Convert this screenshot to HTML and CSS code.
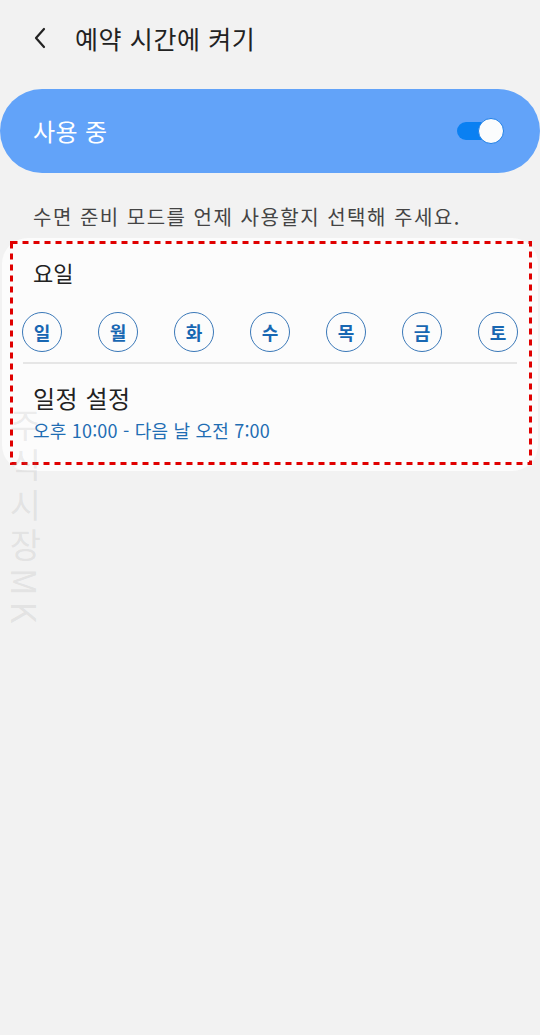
FILE: index.html
```html
<!DOCTYPE html>
<html lang="ko">
<head>
    <meta charset="UTF-8">
    <meta name="viewport" content="width=device-width, initial-scale=1.0">
    <title>예약 시간에 켜기</title>
    <link rel="stylesheet" href="styles.css">
</head>
<body>
    <div class="page">
        <div class="header">
            <svg class="back" width="14" height="22" viewBox="0 0 14 22">
                <path d="M11 2 L3 11 L11 20" fill="none" stroke="#222" stroke-width="2.2" stroke-linecap="round" stroke-linejoin="round"/>
            </svg>
            <span class="title">예약 시간에 켜기</span>
        </div>

        <div class="master">
            <span class="master-label">사용 중</span>
            <div class="switch">
                <div class="switch-track"></div>
                <div class="switch-thumb"></div>
            </div>
        </div>

        <p class="desc">수면 준비 모드를 언제 사용할지 선택해 주세요.</p>

        <div class="card">
            <div class="section-title">요일</div>
            <div class="days">
                <span class="day">일</span>
                <span class="day">월</span>
                <span class="day">화</span>
                <span class="day">수</span>
                <span class="day">목</span>
                <span class="day">금</span>
                <span class="day">토</span>
            </div>
            <div class="divider"></div>
            <div class="schedule">
                <div class="schedule-title">일정 설정</div>
                <div class="schedule-time">오후 10:00 - 다음 날 오전 7:00</div>
            </div>

            <!-- 빨간 점선 표시 -->
            <svg class="mark" width="522" height="224" viewBox="0 0 522 224">
                <rect x="1.5" y="1.5" width="519" height="221" fill="none" stroke="#e00000" stroke-width="3" stroke-dasharray="6 5"/>
            </svg>
        </div>

        <div class="watermark">주식시장MK</div>
    </div>
</body>
</html>
```

FILE: styles.css
```css
body {
    margin: 0;
    background-color: #f2f2f2;
    font-family: "Noto Sans CJK KR", "Noto Sans", sans-serif;
    color: #222;
}
.page {
    position: relative;
    width: 540px;
    height: 1035px;
    overflow: hidden;
}
.header {
    display: flex;
    align-items: center;
    height: 76px;
    padding-left: 33px;
}
.back {
    display: block;
}
.title {
    margin-left: 28px;
    font-size: 25px;
    line-height: 30px;
    letter-spacing: 0.6px;
    color: #222;
}
.master {
    display: flex;
    align-items: center;
    justify-content: space-between;
    margin-top: 13px;
    height: 84px;
    padding: 0 36px 0 33px;
    background-color: #62a3f9;
    border-radius: 42px;
}
.master-label {
    font-size: 24px;
    line-height: 30px;
    letter-spacing: 0.4px;
    color: #fff;
}
.switch {
    position: relative;
    width: 47px;
    height: 26px;
}
.switch-track {
    position: absolute;
    left: 0;
    top: 4px;
    width: 44px;
    height: 18px;
    border-radius: 9px;
    background-color: #0a80f2;
}
.switch-thumb {
    position: absolute;
    right: 0;
    top: 0;
    width: 24px;
    height: 24px;
    border-radius: 50%;
    background-color: #fbfcfd;
    border: 1px solid #1f7fe6;
}
.desc {
    margin: 31px 0 0 33px;
    font-size: 20px;
    line-height: 26px;
    letter-spacing: 1.5px;
    color: #444;
}
.card {
    position: relative;
    margin: 8px 2px 0 2px;
    height: 233px;
    background-color: #fcfcfc;
    border-radius: 26px;
}
.section-title {
    padding: 20px 0 0 31px;
    font-size: 22px;
    line-height: 28px;
}
.days {
    display: flex;
    justify-content: space-between;
    padding: 26px 20px 0 20px;
}
.day {
    display: flex;
    align-items: center;
    justify-content: center;
    width: 38px;
    height: 38px;
    border: 1.2px solid #3a78b8;
    border-radius: 50%;
    font-size: 18px;
    font-weight: bold;
    color: #1867b2;
}
.divider {
    margin: 10px 21px 0 21px;
    height: 2px;
    background-color: #e6e6e6;
}
.schedule {
    padding: 20px 0 0 31px;
}
.schedule-title {
    font-size: 24px;
    line-height: 28px;
    letter-spacing: 0.5px;
}
.schedule-time {
    margin-top: 7px;
    font-size: 18px;
    line-height: 22px;
    letter-spacing: 0.2px;
    color: #1f6db3;
}
.mark {
    position: absolute;
    left: 8px;
    top: 3px;
}
.watermark {
    position: absolute;
    left: 8px;
    top: 408px;
    writing-mode: vertical-rl;
    font-size: 34px;
    line-height: 34px;
    letter-spacing: 6px;
    color: rgba(150, 150, 150, 0.18);
}
```
